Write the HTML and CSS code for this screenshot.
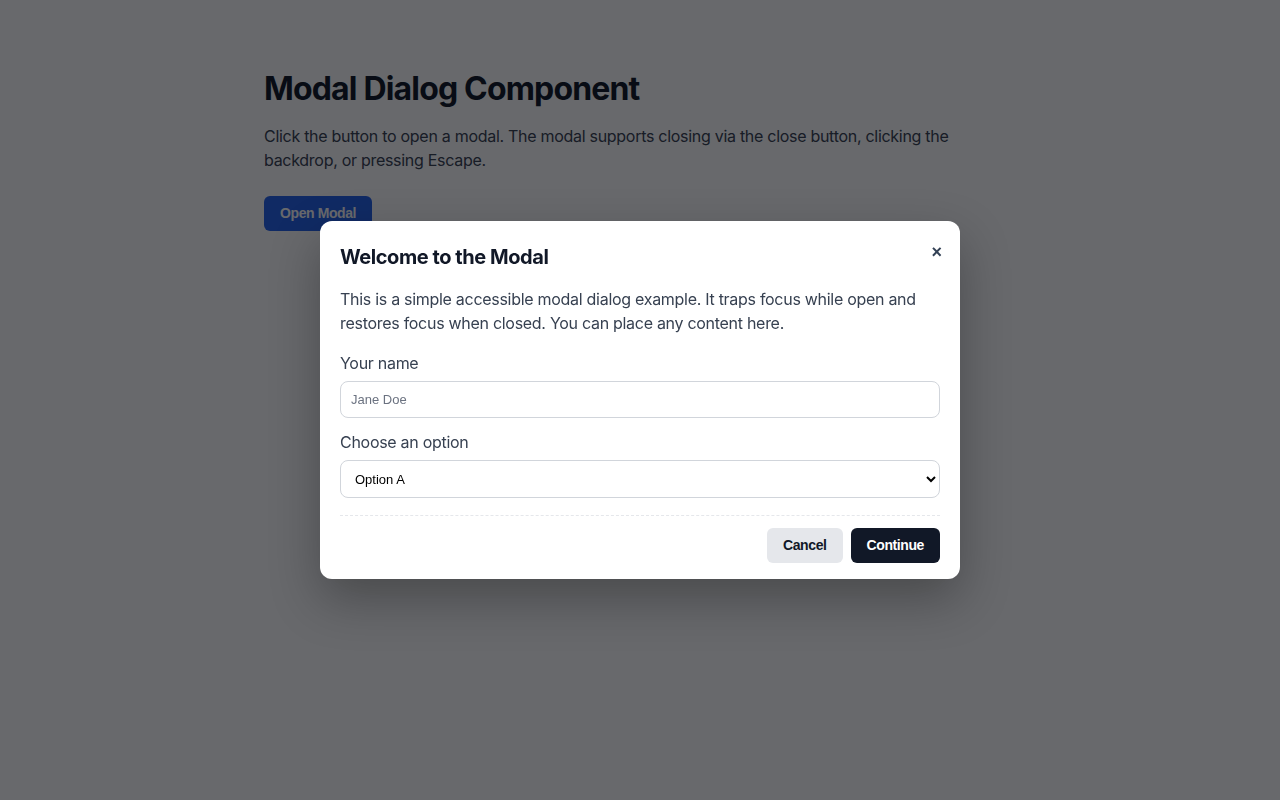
FILE: index.html
```html
<!DOCTYPE html>
<html lang="en">
<head>
<meta charset="utf-8">
<title>Modal Dialog Component</title>
<link rel="stylesheet" href="styles.css">
</head>
<body>
<main class="page">
  <h1 class="page-title">Modal Dialog Component</h1>
  <p class="page-text">Click the button to open a modal. The modal supports closing via the close button, clicking the backdrop, or pressing Escape.</p>
  <button class="btn btn-primary" type="button">Open Modal</button>
</main>
<div class="backdrop">
  <div class="modal" role="dialog" aria-modal="true" aria-labelledby="modal-title">
    <div class="modal-header">
      <h2 class="modal-title" id="modal-title">Welcome to the Modal</h2>
      <button class="modal-close" type="button" aria-label="Close">&times;</button>
    </div>
    <p class="modal-text">This is a simple accessible modal dialog example. It traps focus while open and restores focus when closed. You can place any content here.</p>
    <label class="field-label" for="name">Your name</label>
    <input class="field-input" id="name" type="text" placeholder="Jane Doe">
    <label class="field-label field-label-second" for="opt">Choose an option</label>
    <select class="field-input field-select" id="opt">
      <option>Option A</option>
      <option>Option B</option>
      <option>Option C</option>
    </select>
    <div class="modal-footer">
      <button class="btn btn-secondary" type="button">Cancel</button>
      <button class="btn btn-dark" type="button">Continue</button>
    </div>
  </div>
</div>
</body>
</html>
```
FILE: styles.css
```css
* { box-sizing: border-box; }
html, body { margin: 0; padding: 0; }
body {
  background: #ffffff;
  font-family: Inter, "Noto Sans", sans-serif;
  color: #374151;
  letter-spacing: -0.018em;
  height: 800px;
}
.page {
  max-width: 752px;
  margin: 0 auto;
  padding-top: 70px;
}
.page-title {
  margin: 0;
  font-size: 32px;
  line-height: 38px;
  font-weight: 700;
  color: #111827;
  letter-spacing: -0.026em;
}
.page-text {
  margin: 16px 0 24px;
  font-size: 16px;
  line-height: 24px;
  color: #374151;
}
.btn {
  font-family: "Liberation Sans", Arial, sans-serif;
  font-weight: 700;
  font-size: 14px;
  line-height: 17px;
  letter-spacing: -0.4px;
  padding: 9px 16px;
  border: none;
  border-radius: 6px;
  cursor: pointer;
}
.btn-primary { background: #2563eb; color: #ffffff; }
.btn-secondary { background: #e5e7eb; color: #111827; }
.btn-dark { background: #111827; color: #ffffff; }
.backdrop {
  position: fixed;
  inset: 0;
  background: rgba(3, 5, 10, 0.6);
  display: flex;
  align-items: center;
  justify-content: center;
}
.modal {
  width: 640px;
  background: #ffffff;
  border-radius: 12px;
  padding: 20px 20px 16px;
  box-shadow: 0 20px 50px rgba(0, 0, 0, 0.3);
  display: flex;
  flex-direction: column;
}
.modal-header {
  display: flex;
  justify-content: space-between;
  align-items: flex-start;
}
.modal-title {
  margin: 2px 0 0;
  font-size: 20px;
  line-height: 28px;
  font-weight: 700;
  color: #111827;
  letter-spacing: -0.022em;
}
.modal-close {
  background: none;
  border: none;
  padding: 0;
  margin: 2px -2px 0 0;
  font-family: "Liberation Sans", Arial, sans-serif;
  font-size: 18px;
  line-height: 18px;
  font-weight: 700;
  color: #334155;
  cursor: pointer;
}
.modal-text {
  margin: 16px 0 16px;
  font-size: 16px;
  line-height: 24px;
  color: #374151;
}
.field-label {
  font-size: 16px;
  line-height: 24px;
  color: #374151;
  margin-bottom: 6px;
}
.field-label-second { margin-top: 12px; }
.field-input {
  width: 100%;
  height: 37px;
  border: 1px solid #d1d5db;
  border-radius: 8px;
  padding: 0 10px;
  font-family: "Liberation Sans", Arial, sans-serif;
  font-size: 13px;
  letter-spacing: 0;
  color: #000000;
  background: #ffffff;
}
.field-input::placeholder { color: #6b7280; }
.field-select { height: 38px; }
.modal-footer {
  margin-top: 17px;
  padding-top: 12px;
  border-top: 1px dashed #e5e7eb;
  display: flex;
  justify-content: flex-end;
  gap: 8px;
}
```
